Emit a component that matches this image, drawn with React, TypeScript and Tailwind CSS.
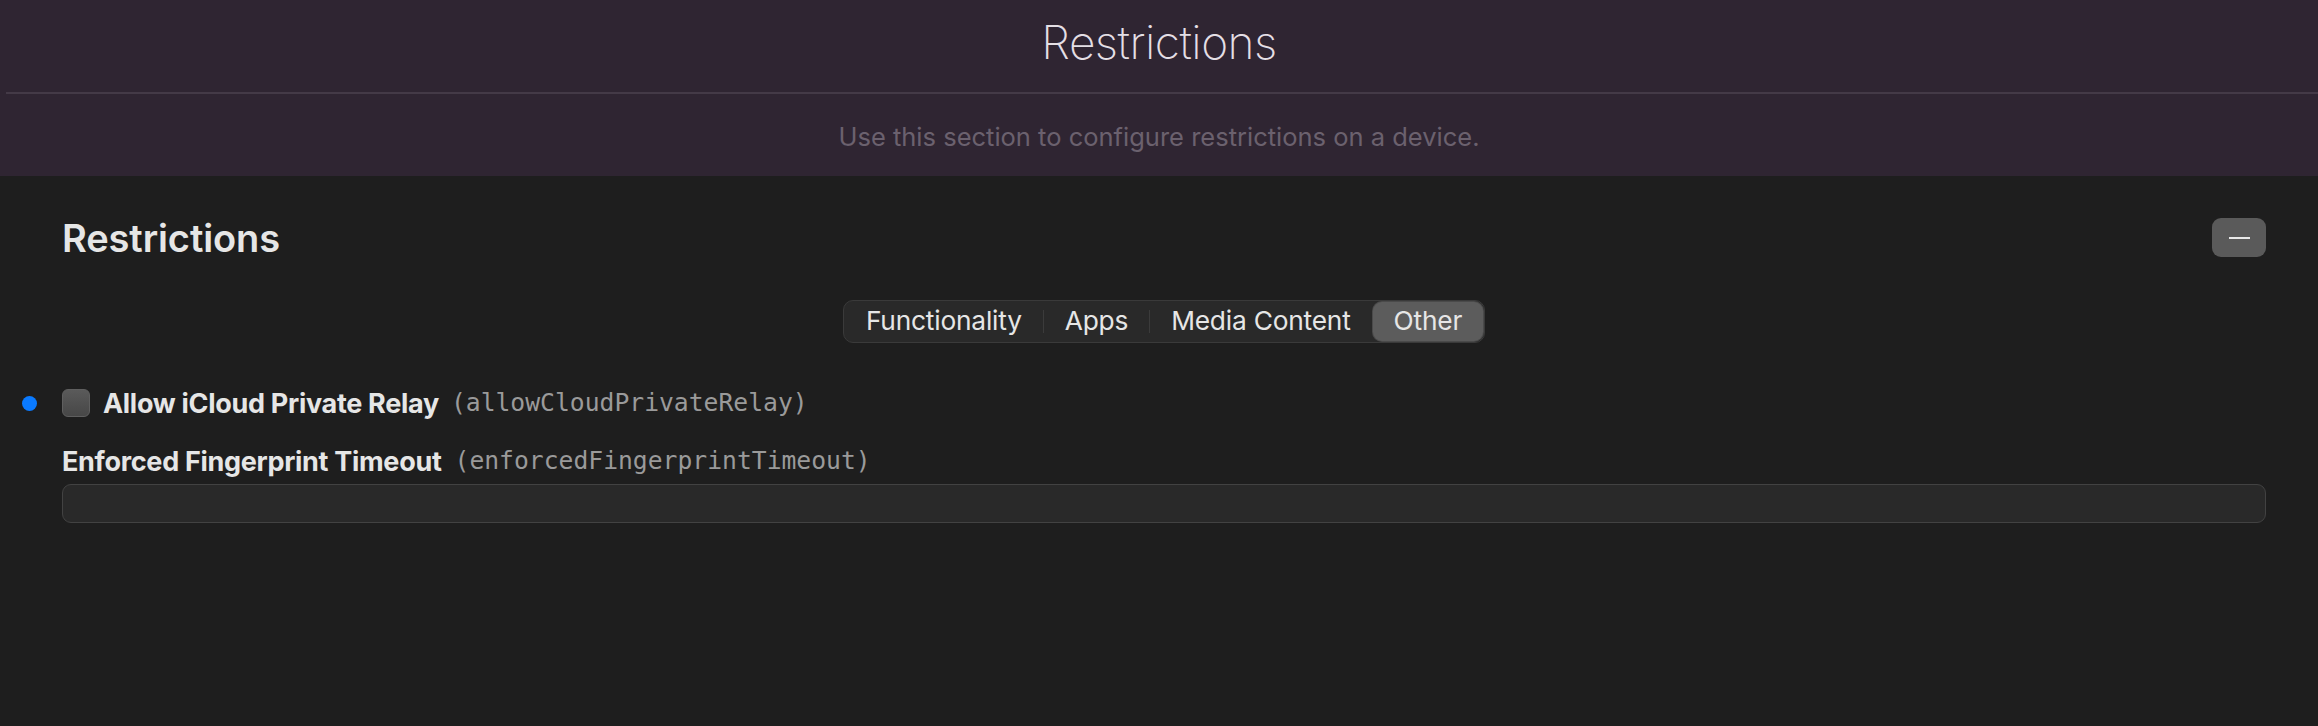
import React, { useState } from 'react';

const tabs = ['Functionality', 'Apps', 'Media Content', 'Other'];

const SegmentedControl = ({ active, onChange }: { active: string; onChange: (t: string) => void }) => (
  <div className="flex h-[43px] items-center rounded-[10px] border border-[#3a3a3a] bg-[#292929] p-[1px]">
    {tabs.map((t, i) => {
      const isActive = t === active;
      const prevActive = i > 0 && tabs[i - 1] === active;
      return (
        <React.Fragment key={t}>
          {i > 0 && (
            <div className={`h-[23px] w-px ${isActive || prevActive ? 'bg-transparent' : 'bg-[#3b3b3b]'}`} />
          )}
          <button
            onClick={() => onChange(t)}
            className={`flex h-full items-center rounded-[9px] px-[21px] text-[26.3px] leading-none tracking-[-0.2px] text-[#e6e6e6] ${
              isActive ? 'bg-[#5c5c5c] shadow-[0_0_0_1px_#4a4a4a]' : ''
            }`}
          >
            {t}
          </button>
        </React.Fragment>
      );
    })}
  </div>
);

export default function App() {
  const [tab, setTab] = useState('Other');
  const [relay, setRelay] = useState(false);

  return (
    <div className="min-h-[726px] bg-[#1e1e1e] font-['Inter',sans-serif]">
      <header className="h-[176px] bg-[#2f2532]">
        <div className="flex h-[92px] items-center justify-center pb-[8px]">
          <h1 className="text-[46px] font-extralight leading-none tracking-[-0.5px] text-[#e4dfe5]">Restrictions</h1>
        </div>
        <div className="ml-[6px] h-[2px] bg-[#443a47]" />
        <div className="flex h-[82px] items-center justify-center pt-[4px]">
          <p className="text-[25.5px] leading-none text-[#6b616e]">Use this section to configure restrictions on a device.</p>
        </div>
      </header>

      <main className="pl-[62px] pr-[52px]">
        <div className="flex items-center justify-between pt-[42px]">
          <h2 className="text-[38px] font-semibold leading-none tracking-[-0.1px] text-[#e6e6e6]">Restrictions</h2>
          <button className="flex h-[39px] w-[54px] items-center justify-center rounded-[9px] bg-[#5a5a5a]">
            <span className="block h-[2px] w-[21px] bg-[#e8e8e8]" />
          </button>
        </div>

        <div className="mt-[43px] flex justify-center">
          <SegmentedControl active={tab} onChange={setTab} />
        </div>

        <div className="ml-[-40px] mt-[46px] flex h-[28px] items-center">
          <span className="mr-[25px] block h-[15px] w-[15px] rounded-full bg-[#0a7aff]" />
          <button
            onClick={() => setRelay(!relay)}
            className="h-[28px] w-[28px] rounded-[6px] border border-[#5f5f5f] bg-gradient-to-b from-[#5a5a5a] to-[#474747]"
          />
          <span className="ml-[13px] text-[27px] font-bold leading-none tracking-[-0.3px] text-[#e6e6e6]">
            Allow iCloud Private Relay
          </span>
          <span className="ml-[12px] font-['DejaVu_Sans_Mono',monospace] text-[24.7px] leading-none text-[#9a9a9a]">
            (allowCloudPrivateRelay)
          </span>
        </div>

        <div className="mt-[29px] flex h-[30px] items-center">
          <span className="text-[27px] font-bold leading-none tracking-[-0.3px] text-[#e6e6e6]">
            Enforced Fingerprint Timeout
          </span>
          <span className="ml-[13px] font-['DejaVu_Sans_Mono',monospace] text-[24.7px] leading-none text-[#9a9a9a]">
            (enforcedFingerprintTimeout)
          </span>
        </div>

        <input
          type="text"
          className="mt-[8px] block h-[39px] w-full rounded-[9px] border border-[#424242] bg-[#292929] px-3 text-[22px] text-[#e6e6e6] outline-none"
        />
      </main>
    </div>
  );
}
